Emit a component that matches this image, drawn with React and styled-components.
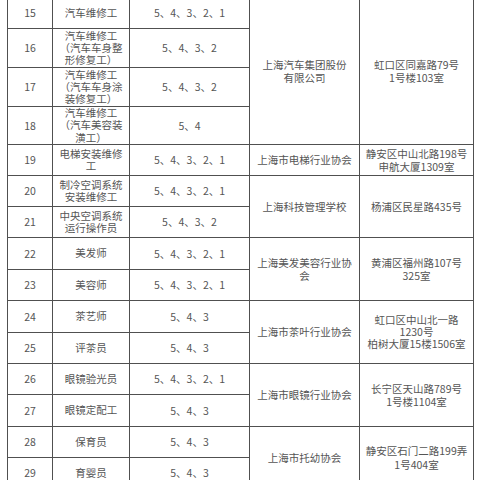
import React from "react";
import styled, { createGlobalStyle } from "styled-components";

const Global = createGlobalStyle`
  html, body { margin: 0; padding: 0; background: #fff; overflow: hidden; }
  body { font-family: "Noto Sans CJK SC", "Noto Sans", sans-serif; }
`;

const Page = styled.div`
  width: 480px;
  height: 480px;
  overflow: hidden;
  padding: 0 0 0 7px;
  box-sizing: border-box;
`;

const Table = styled.table`
  margin-top: -3px;
  width: 467px;
  table-layout: fixed;
  border-collapse: collapse;
  font-size: 10.5px;
  line-height: 13.5px;
  color: #555;
`;

const Row = styled.tr`
  height: ${(p) => p.$h}px;
`;

const Cell = styled.td`
  border: 1px solid #505050;
  padding: 0;
  text-align: center;
  vertical-align: middle;
  white-space: nowrap;
  overflow: hidden;
  line-height: ${(p) => (p.$tight ? "12.3px" : "13.5px")};
`;

const Col = styled.col`
  width: ${(p) => p.$w}px;
`;

const Lines = ({ t }) =>
  t.split("|").map((s, i, a) => (
    <React.Fragment key={i}>
      {s}
      {i < a.length - 1 && <br />}
    </React.Fragment>
  ));

const rows = [
  { n: 15, job: "汽车维修工", lv: "5、4、3、2、1", h: 31, org: { t: "上海汽车集团股份|有限公司", span: 4 }, addr: { t: "虹口区同嘉路79号|1号楼103室", span: 4 } },
  { n: 16, job: "汽车维修工|（汽车车身整|形修复工）", lv: "5、4、3、2", h: 39 },
  { n: 17, job: "汽车维修工|（汽车车身涂|装修复工）", lv: "5、4、3、2", h: 39 },
  { n: 18, job: "汽车维修工|（汽车美容装|潢工）", lv: "5、4", h: 38 },
  { n: 19, job: "电梯安装维修|工", lv: "5、4、3、2、1", h: 31, org: { t: "上海市电梯行业协会", span: 1 }, addr: { t: "静安区中山北路198号|申航大厦1309室", span: 1 } },
  { n: 20, job: "制冷空调系统|安装维修工", lv: "5、4、3、2、1", h: 31, org: { t: "上海科技管理学校", span: 2 }, addr: { t: "杨浦区民星路435号", span: 2 } },
  { n: 21, job: "中央空调系统|运行操作员", lv: "5、4、3、2", h: 31 },
  { n: 22, job: "美发师", lv: "5、4、3、2、1", h: 32, org: { t: "上海美发美容行业协|会", span: 2 }, addr: { t: "黄浦区福州路107号|325室", span: 2 } },
  { n: 23, job: "美容师", lv: "5、4、3、2、1", h: 31 },
  { n: 24, job: "茶艺师", lv: "5、4、3", h: 32, org: { t: "上海市茶叶行业协会", span: 2 }, addr: { t: "虹口区中山北一路|1230号|柏树大厦15楼1506室", span: 2 } },
  { n: 25, job: "评茶员", lv: "5、4、3", h: 31 },
  { n: 26, job: "眼镜验光员", lv: "5、4、3、2、1", h: 31, org: { t: "上海市眼镜行业协会", span: 2 }, addr: { t: "长宁区天山路789号|1号楼1104室", span: 2 } },
  { n: 27, job: "眼镜定配工", lv: "5、4、3", h: 32 },
  { n: 28, job: "保育员", lv: "5、4、3", h: 31, org: { t: "上海市托幼协会", span: 2 }, addr: { t: "静安区石门二路199弄|1号404室", span: 2 } },
  { n: 29, job: "育婴员", lv: "5、4、3", h: 31 },
];

export default function App() {
  return (
    <Page>
      <Global />
      <Table>
        <colgroup>
          <Col $w={45} />
          <Col $w={77} />
          <Col $w={120} />
          <Col $w={110} />
          <Col $w={114} />
        </colgroup>
        <tbody>
          {rows.map((r) => (
            <Row key={r.n} $h={r.h}>
              <Cell>{r.n}</Cell>
              <Cell $tight>
                <Lines t={r.job} />
              </Cell>
              <Cell>{r.lv}</Cell>
              {r.org && (
                <Cell rowSpan={r.org.span}>
                  <Lines t={r.org.t} />
                </Cell>
              )}
              {r.addr && (
                <Cell rowSpan={r.addr.span} $tight={r.addr.t.split("|").length > 2}>
                  <Lines t={r.addr.t} />
                </Cell>
              )}
            </Row>
          ))}
        </tbody>
      </Table>
    </Page>
  );
}
